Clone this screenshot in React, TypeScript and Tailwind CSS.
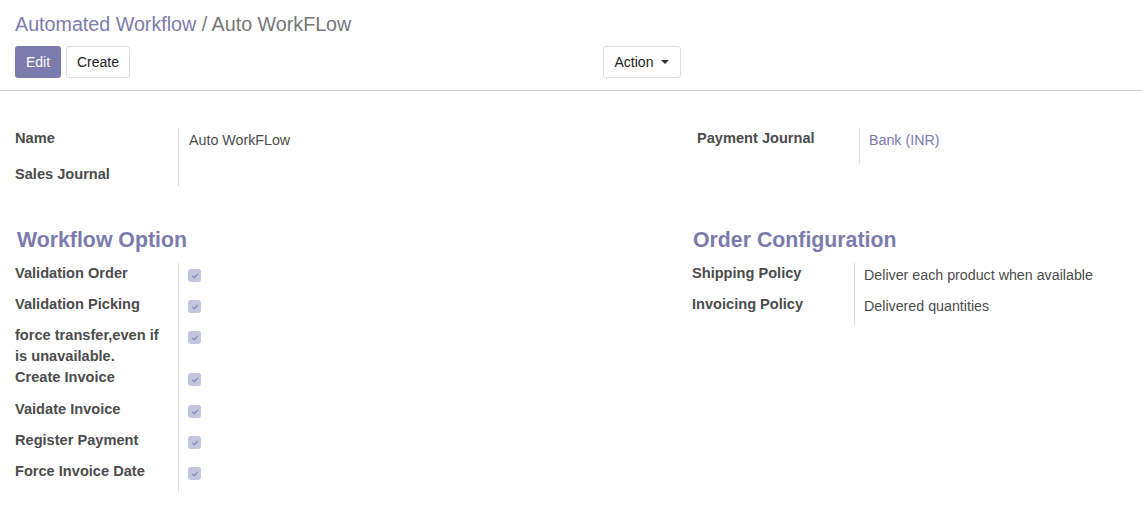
import React from "react";

const PURPLE = "text-[#7c7bad]";
const LBL = "font-bold leading-[21px] text-[14.6px] text-[#4c4c4c]";
const VAL = "leading-[21px] text-[14.25px]";

function Check() {
  return (
    <div className="w-[13px] h-[13px] rounded-[3px] bg-[#c5c4de] flex items-center justify-center">
      <svg width="8" height="8" viewBox="0 0 10 10">
        <path d="M2 5.2 L4.1 7.2 L8 3" stroke="#8a89b8" strokeWidth="1.6" fill="none" strokeLinecap="round" strokeLinejoin="round" />
      </svg>
    </div>
  );
}

function CheckRow({ label, h }: { label: React.ReactNode; h: string }) {
  return (
    <div className={`flex ${h}`}>
      <div className={`w-[163px] pr-[10px] ${LBL}`}>{label}</div>
      <div className="border-l border-[#ddd] pl-[9px] pt-[6px]">
        <Check />
      </div>
    </div>
  );
}

export default function App() {
  return (
    <div className="w-[1142px] h-[513px] bg-white text-[14px] text-[#4c4c4c]" style={{ fontFamily: "'Liberation Sans', Arial, sans-serif" }}>
      <div className="px-[15px] pt-[9px] h-[91px] border-b border-[#ccc]">
        <div className="text-[19.7px] leading-[30px]">
          <span className={PURPLE}>Automated Workflow</span>
          <span className="text-[#777]"> / Auto WorkFLow</span>
        </div>
        <div className="flex mt-[7px] items-start">
          <button className="h-[32px] w-[46px] rounded-[3px] bg-[#7c7bad] text-white text-[14px]">Edit</button>
          <button className="ml-[5px] h-[32px] w-[64px] rounded-[3px] border border-[#ddd] bg-white text-[#222] text-[14px]">Create</button>
          <button className="ml-[473px] h-[32px] w-[78px] rounded-[3px] border border-[#ddd] bg-white text-[#222] text-[14px] flex items-center justify-center gap-[8px]">
            <span>Action</span>
            <span className="w-0 h-0 border-l-[4px] border-r-[4px] border-t-[4px] border-l-transparent border-r-transparent border-t-[#333]" />
          </button>
        </div>
      </div>

      <div className="flex pt-[37px]">
        <div className="w-[697px] pl-[15px]">
          <div className="flex h-[36px]">
            <div className={`w-[163px] ${LBL}`}>Name</div>
            <div className={`border-l border-[#ddd] pl-[10px] pt-[2px] ${VAL}`}>Auto WorkFLow</div>
          </div>
          <div className="flex h-[22px]">
            <div className={`w-[163px] ${LBL}`}>Sales Journal</div>
            <div className="border-l border-[#ddd]" />
          </div>
        </div>
        <div className="flex h-[36px]">
          <div className={`w-[162px] ${LBL}`}>Payment Journal</div>
          <div className={`border-l border-[#ddd] pl-[9px] pt-[2px] ${VAL} ${PURPLE}`}>Bank (INR)</div>
        </div>
      </div>

      <div className="flex pt-[37px]">
        <div className="w-[692px] pl-[15px]">
          <div className={`text-[21.3px] leading-[35px] font-bold pl-[2px] ${PURPLE}`}>Workflow Option</div>
          <div className="mt-[5px]">
            <CheckRow label="Validation Order" h="h-[31px]" />
            <CheckRow label="Validation Picking" h="h-[31px]" />
            <CheckRow label={<>force transfer,even if<br />is unavailable.</>} h="h-[42px]" />
            <CheckRow label="Create Invoice" h="h-[32px]" />
            <CheckRow label="Vaidate Invoice" h="h-[31px]" />
            <CheckRow label="Register Payment" h="h-[31px]" />
            <CheckRow label="Force Invoice Date" h="h-[31px]" />
          </div>
        </div>
        <div>
          <div className={`text-[21.3px] leading-[35px] font-bold pl-[1px] ${PURPLE}`}>Order Configuration</div>
          <div className="mt-[5px]">
            <div className="flex h-[31px]">
              <div className={`w-[162px] ${LBL}`}>Shipping Policy</div>
              <div className={`border-l border-[#ddd] pl-[9px] pt-[2px] ${VAL}`}>Deliver each product when available</div>
            </div>
            <div className="flex h-[31px]">
              <div className={`w-[162px] ${LBL}`}>Invoicing Policy</div>
              <div className={`border-l border-[#ddd] pl-[9px] pt-[2px] ${VAL}`}>Delivered quantities</div>
            </div>
          </div>
        </div>
      </div>
    </div>
  );
}
